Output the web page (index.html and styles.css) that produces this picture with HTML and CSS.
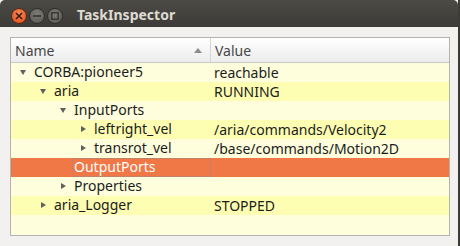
FILE: index.html
```html
<!DOCTYPE html>
<html lang="en">
<head>
  <meta charset="UTF-8" />
  <title>TaskInspector</title>
  <link rel="stylesheet" href="styles.css">
</head>
<body>
  <div class="window">
    <div class="titlebar">
      <div class="botoes">
        <span class="btn fechar">
          <svg width="8" height="8" viewBox="0 0 8 8"><path d="M1 1 L7 7 M7 1 L1 7" stroke="#3c1a0c" stroke-width="1.6"/></svg>
        </span>
        <span class="btn">
          <svg width="8" height="8" viewBox="0 0 8 8"><path d="M0 4 H8" stroke="#36352f" stroke-width="1.6"/></svg>
        </span>
        <span class="btn">
          <svg width="8" height="8" viewBox="0 0 8 8"><rect x="0.8" y="0.8" width="6.4" height="6.4" fill="none" stroke="#36352f" stroke-width="1.4"/></svg>
        </span>
      </div>
      <span class="titulo">TaskInspector</span>
    </div>

    <div class="conteudo">
      <div class="arvore">
        <div class="cabecalho">
          <div class="col-nome">
            <span>Name</span>
            <svg class="ordem" width="8" height="5" viewBox="0 0 8 5"><path d="M0 5 L4 0 L8 5 Z" fill="#8c8c8c"/></svg>
          </div>
          <div class="col-valor">Value</div>
        </div>

        <div class="linha">
          <div class="col-nome nivel0"><span class="seta aberta"></span><span class="rotulo">CORBA:pioneer5</span></div>
          <div class="col-valor">reachable</div>
        </div>
        <div class="linha alt">
          <div class="col-nome nivel1"><span class="seta aberta"></span><span class="rotulo">aria</span></div>
          <div class="col-valor">RUNNING</div>
        </div>
        <div class="linha">
          <div class="col-nome nivel2"><span class="seta aberta"></span><span class="rotulo">InputPorts</span></div>
          <div class="col-valor"></div>
        </div>
        <div class="linha alt">
          <div class="col-nome nivel3"><span class="seta fechada"></span><span class="rotulo">leftright_vel</span></div>
          <div class="col-valor">/aria/commands/Velocity2</div>
        </div>
        <div class="linha">
          <div class="col-nome nivel3"><span class="seta fechada"></span><span class="rotulo">transrot_vel</span></div>
          <div class="col-valor">/base/commands/Motion2D</div>
        </div>
        <div class="linha selecionada">
          <div class="col-nome nivel2"><span class="seta"></span><span class="rotulo foco">OutputPorts</span></div>
          <div class="col-valor"></div>
        </div>
        <div class="linha">
          <div class="col-nome nivel2"><span class="seta fechada"></span><span class="rotulo">Properties</span></div>
          <div class="col-valor"></div>
        </div>
        <div class="linha alt">
          <div class="col-nome nivel1"><span class="seta fechada"></span><span class="rotulo">aria_Logger</span></div>
          <div class="col-valor">STOPPED</div>
        </div>
      </div>
    </div>
  </div>
</body>
</html>
```

FILE: styles.css
```css
* {
  margin: 0;
  padding: 0;
  box-sizing: border-box;
}

body {
  background-color: #3c3b37;
  font-family: "Noto Sans", "DejaVu Sans", sans-serif;
  width: 460px;
  height: 246px;
  overflow: hidden;
}

.window {
  width: 458px;
  height: 246px;
  display: flex;
  flex-direction: column;
  background-color: #f2f1f0;
}

/* barra de titulo */
.titlebar {
  height: 27px;
  display: flex;
  align-items: center;
  background: linear-gradient(#4b4a45, #3c3b37);
  border-radius: 5px 5px 0 0;
  padding-top: 4px;
}

.botoes {
  display: flex;
  gap: 2px;
  padding-left: 11px;
}

.btn {
  width: 16px;
  height: 16px;
  border-radius: 50%;
  display: flex;
  align-items: center;
  justify-content: center;
  background: radial-gradient(circle at 50% 35%, #7c7b76, #57564f);
  border: 1px solid #2f2e2a;
}

.btn.fechar {
  background: radial-gradient(circle at 50% 35%, #f6895a, #df4a13);
  border-color: #5a2a14;
}

.titulo {
  margin-left: 14px;
  color: #dfdbd2;
  font-weight: bold;
  font-size: 14px;
  margin-top: -3px;
}

/* area da arvore */
.conteudo {
  flex: 1;
  padding: 10px 8px 10px 10px;
}

.arvore {
  width: 440px;
  height: 199px;
  border: 1px solid #b5b3ad;
  background-color: #fefedc;
  font-size: 14px;
  color: #1c1c1c;
}

.cabecalho {
  display: flex;
  height: 25px;
  background: linear-gradient(#ffffff, #ececec);
  border-bottom: 1px solid #c9c9c9;
  color: #464646;
}

.cabecalho .col-nome {
  border-right: 1px solid #d6d6d6;
  padding-left: 4px;
  justify-content: space-between;
  padding-right: 8px;
}

.cabecalho .col-valor {
  padding-left: 4px;
}

.col-nome {
  width: 200px;
  display: flex;
  align-items: center;
}

.col-valor {
  flex: 1;
  display: flex;
  align-items: center;
  padding-left: 3px;
}

.linha {
  display: flex;
  height: 19px;
}

.linha.alt {
  background-color: #fefeb2;
}

.linha.selecionada {
  background-color: #f07746;
  color: #ffffff;
}

.nivel0 { padding-left: 1px; }
.nivel1 { padding-left: 21px; }
.nivel2 { padding-left: 41px; }
.nivel3 { padding-left: 61px; }

.seta {
  width: 20px;
  height: 19px;
  flex-shrink: 0;
  position: relative;
}

.seta.aberta::after {
  content: "";
  position: absolute;
  left: 8px;
  top: 7px;
  border-left: 3.5px solid transparent;
  border-right: 3.5px solid transparent;
  border-top: 5px solid #5e5e5e;
}

.seta.fechada::after {
  content: "";
  position: absolute;
  left: 9px;
  top: 6px;
  border-top: 3.5px solid transparent;
  border-bottom: 3.5px solid transparent;
  border-left: 5px solid #5e5e5e;
}

.rotulo {
  flex: 1;
  height: 19px;
  line-height: 18px;
  padding-left: 2px;
  white-space: nowrap;
}

.rotulo.foco {
  border: 1px dotted #8f8f8f;
  padding-left: 1px;
  line-height: 16px;
}
```
